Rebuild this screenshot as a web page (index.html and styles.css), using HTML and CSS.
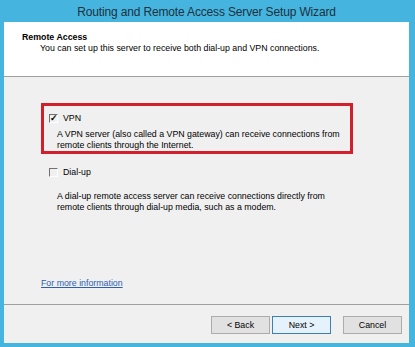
FILE: index.html
```html
<!DOCTYPE html>
<html lang="en">
<head>
  <meta charset="UTF-8" />
  <title>Routing and Remote Access Server Setup Wizard</title>
  <link rel="stylesheet" href="styles.css">
</head>
<body>
  <div class="window">
    <div class="titlebar">Routing and Remote Access Server Setup Wizard</div>

    <div class="page">
      <div class="page-head">
        <h1>Remote Access</h1>
        <p>You can set up this server to receive both dial-up and VPN connections.</p>
      </div>

      <div class="page-body">
        <div class="option selected">
          <label class="check"><span class="box checked">&#10003;</span>VPN</label>
          <p>A VPN server (also called a VPN gateway) can receive connections from<br>remote clients through the Internet.</p>
        </div>

        <div class="option dialup">
          <label class="check"><span class="box"></span>Dial-up</label>
          <p>A dial-up remote access server can receive connections directly from<br>remote clients through dial-up media, such as a modem.</p>
        </div>

        <a class="more" href="#">For more information</a>
      </div>

      <div class="page-foot">
        <button class="btn">&lt; Back</button>
        <button class="btn default">Next &gt;</button>
        <button class="btn cancel">Cancel</button>
      </div>
    </div>
  </div>
</body>
</html>
```

FILE: styles.css
```css
* {
  margin: 0;
  padding: 0;
  box-sizing: border-box;
}
body {
  background: #45b5df;
  font-family: "Liberation Sans", Arial, sans-serif;
  font-size: 8.8px;
  color: #000;
}
.window {
  width: 415px;
  height: 347px;
  padding: 0 6px 4px 4px;
  display: flex;
  flex-direction: column;
}
.titlebar {
  height: 22px;
  line-height: 25px;
  text-align: center;
  font-size: 12px;
  letter-spacing: -0.15px;
  color: #1d3140;
}
.page {
  flex: 1;
  min-height: 0;
  display: flex;
  flex-direction: column;
  background: #f0f0f0;
}
.page-head {
  height: 55px;
  background: #fff;
  border-bottom: 1px solid #a0a0a0;
  padding: 10px 0 0 18px;
}
.page-head h1 {
  font-size: 8.8px;
  font-weight: bold;
  line-height: 11px;
}
.page-head p {
  padding-left: 18px;
  line-height: 11px;
}
.page-body {
  flex: 1;
  min-height: 0;
  overflow: hidden;
  padding: 26px 0 0 37px;
  border-bottom: 1px solid #a0a0a0;
}
.option {
  width: 312px;
  padding: 7px 0 0 8px;
  border: 3px solid transparent;
  margin-bottom: 2px;
}
.option.selected {
  border-color: #d21f2c;
}
.check {
  display: flex;
  align-items: center;
  gap: 5px;
  margin-left: -3px;
  line-height: 11px;
  margin-bottom: 5px;
}
.dialup .check {
  margin-top: 1px;
  margin-bottom: 13px;
}
.box {
  width: 9px;
  height: 9px;
  border: 1px solid #707070;
  border-right-color: #fff;
  border-bottom-color: #fff;
  font-size: 9px;
  line-height: 7px;
  text-align: center;
  font-weight: bold;
}
.option p {
  padding-left: 5px;
  line-height: 11px;
}
.more {
  display: inline-block;
  line-height: 11px;
  margin-top: 60px;
  color: #2d5fb0;
}
.page-foot {
  height: 38px;
  display: flex;
  align-items: center;
  padding: 1px 0 0 207px;
  gap: 2px;
}
.btn {
  width: 59px;
  height: 18px;
  font-family: "Liberation Sans", Arial, sans-serif;
  font-size: 8.8px;
  background: #e1e1e1;
  border: 1px solid #acacac;
  color: #000;
}
.btn.default {
  background: #e5f1fb;
  border-color: #3c7fb1;
}
.btn.cancel {
  margin-left: 10px;
}
```
